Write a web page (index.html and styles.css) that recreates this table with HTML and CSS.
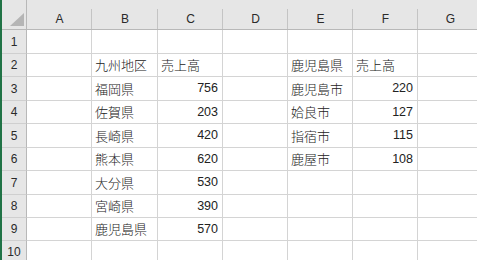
FILE: index.html
```html
<!DOCTYPE html>
<html lang="ja">
<head>
<meta charset="utf-8">
<title>九州地区 売上高</title>
<link rel="stylesheet" href="styles.css">
</head>
<body>
<div class="sheet">
  <div class="edge"></div>
  <div class="grid">
    <div class="corner"><span class="tri"></span></div>
    <div class="colhead">A</div>
    <div class="colhead">B</div>
    <div class="colhead">C</div>
    <div class="colhead">D</div>
    <div class="colhead">E</div>
    <div class="colhead">F</div>
    <div class="colhead">G</div>

    <div class="rowhead">1</div>
    <div class="cell"></div><div class="cell"></div><div class="cell"></div><div class="cell"></div><div class="cell"></div><div class="cell"></div><div class="cell"></div>

    <div class="rowhead">2</div>
    <div class="cell"></div><div class="cell">九州地区</div><div class="cell">売上高</div><div class="cell"></div><div class="cell">鹿児島県</div><div class="cell">売上高</div><div class="cell"></div>

    <div class="rowhead">3</div>
    <div class="cell"></div><div class="cell">福岡県</div><div class="cell num">756</div><div class="cell"></div><div class="cell">鹿児島市</div><div class="cell num">220</div><div class="cell"></div>

    <div class="rowhead">4</div>
    <div class="cell"></div><div class="cell">佐賀県</div><div class="cell num">203</div><div class="cell"></div><div class="cell">姶良市</div><div class="cell num">127</div><div class="cell"></div>

    <div class="rowhead">5</div>
    <div class="cell"></div><div class="cell">長崎県</div><div class="cell num">420</div><div class="cell"></div><div class="cell">指宿市</div><div class="cell num">115</div><div class="cell"></div>

    <div class="rowhead">6</div>
    <div class="cell"></div><div class="cell">熊本県</div><div class="cell num">620</div><div class="cell"></div><div class="cell">鹿屋市</div><div class="cell num">108</div><div class="cell"></div>

    <div class="rowhead">7</div>
    <div class="cell"></div><div class="cell">大分県</div><div class="cell num">530</div><div class="cell"></div><div class="cell"></div><div class="cell"></div><div class="cell"></div>

    <div class="rowhead">8</div>
    <div class="cell"></div><div class="cell">宮崎県</div><div class="cell num">390</div><div class="cell"></div><div class="cell"></div><div class="cell"></div><div class="cell"></div>

    <div class="rowhead">9</div>
    <div class="cell"></div><div class="cell">鹿児島県</div><div class="cell num">570</div><div class="cell"></div><div class="cell"></div><div class="cell"></div><div class="cell"></div>

    <div class="rowhead">10</div>
    <div class="cell"></div><div class="cell"></div><div class="cell"></div><div class="cell"></div><div class="cell"></div><div class="cell"></div><div class="cell"></div>
  </div>
</div>
</body>
</html>
```

FILE: styles.css
```css
html, body {
  margin: 0;
  padding: 0;
  background: #ffffff;
  overflow: hidden;
}

.sheet {
  display: flex;
  width: 477px;
  height: 260px;
  overflow: hidden;
  font-family: "Liberation Sans", "Noto Sans CJK JP", sans-serif;
  color: #1a1a1a;
}

/* green frame of the workbook window */
.edge {
  width: 2px;
  flex: none;
  background: #217346;
}

.grid {
  display: grid;
  grid-template-columns: 25px 65px 66px 65px 65px 65px 65px 65px;
  /* header, then rows that alternate 24px / 23px */
  grid-template-rows: 30px 24px 23px 24px 23px 24px 23px 24px 23px 23px 22px;
  flex: none;
}

.grid > div {
  box-sizing: border-box;
}

/* column header strip */
.corner,
.colhead {
  background-color: #e6e6e6;
  border-bottom: 1px solid #b8b8b8;
}

.colhead {
  display: flex;
  align-items: center;
  justify-content: center;
  padding-top: 9px;
  font-size: 12px;
  color: #2a2a2a;
  background-image: linear-gradient(#c4c4c4, #c4c4c4);
  background-size: 1px calc(100% - 9px);
  background-position: right bottom;
  background-repeat: no-repeat;
}

.corner {
  position: relative;
  border-right: 1px solid #b8b8b8;
}

/* select-all triangle */
.corner .tri {
  position: absolute;
  right: 2px;
  bottom: 3px;
  width: 0;
  height: 0;
  border-left: 14px solid transparent;
  border-bottom: 13px solid #b5b5b5;
}

/* row header strip */
.rowhead {
  display: flex;
  align-items: center;
  justify-content: center;
  background: #e6e6e6;
  border-right: 1px solid #b8b8b8;
  border-bottom: 1px solid #cfcfcf;
  font-size: 12px;
  color: #2a2a2a;
}

.cell {
  display: flex;
  align-items: center;
  padding: 0 3px 1px 3px;
  border-right: 1px solid #d4d4d4;
  border-bottom: 1px solid #d4d4d4;
  font-size: 13px;
  font-weight: 300;
  color: #222222;
  white-space: nowrap;
  overflow: hidden;
}

.num {
  justify-content: flex-end;
  padding-right: 4px;
  font-size: 12.5px;
  font-weight: 400;
}
```
